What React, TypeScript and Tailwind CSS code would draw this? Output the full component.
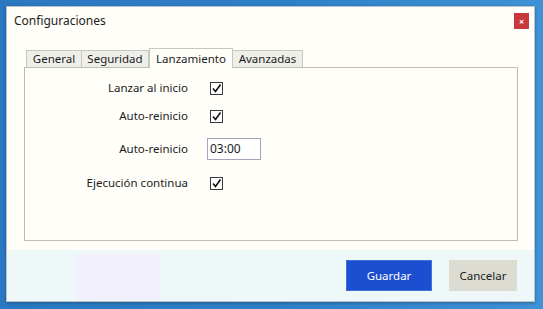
import React from "react";

function Check() {
  return (
    <div className="w-[13px] h-[13px] border border-[#3a3a3a] bg-white flex items-center justify-center">
      <svg width="11" height="11" viewBox="0 0 11 11">
        <polyline points="2,5.5 4.5,8.5 9.5,1.5" fill="none" stroke="#111" strokeWidth="1.6" />
      </svg>
    </div>
  );
}

export default function App() {
  const font = { fontFamily: '"Noto Sans", "Open Sans", sans-serif' };
  return (
    <div
      className="w-[543px] h-[309px] bg-gradient-to-r from-[#2a78c2] via-[#2f7fc6] to-[#3f92d6] pt-[6px] pl-[6px] overflow-hidden"
      style={font}
    >
      <div className="w-[529px] h-[296px] flex flex-col bg-[#fffef8] border border-[#b8c4cc] shadow-[0_1px_3px_rgba(0,0,0,0.3)] text-[11.5px] text-[#1c1c1c]">
        {/* title bar */}
        <div className="h-[30px] flex items-start justify-between pl-[7px] pr-[5px]">
          <span className="mt-[5px] text-[12px]">Configuraciones</span>
          <div className="mt-[6px] w-[15px] h-[16px] bg-[#c8393c] flex items-center justify-center text-white text-[9px] leading-none font-bold">
            ×
          </div>
        </div>
        {/* tabs + panel */}
        <div className="pl-[17px] pr-[16px] pt-[10px]">
          <div className="flex items-end h-[20px] pl-[2px]">
            <div className="w-[56px] h-[17px] flex items-center justify-center bg-[#efefea] border border-b-0 border-[#c8c8c2]">General</div>
            <div className="w-[67px] h-[17px] flex items-center justify-center bg-[#efefea] border border-b-0 border-l-0 border-[#c8c8c2]">Seguridad</div>
            <div className="w-[84px] h-[20px] flex items-center justify-center bg-[#fffef8] border border-b-0 border-[#c8c8c2] relative top-[1px] z-10">Lanzamiento</div>
            <div className="w-[70px] h-[17px] flex items-center justify-center bg-[#efefea] border border-b-0 border-l-0 border-[#c8c8c2]">Avanzadas</div>
          </div>
          <div className="h-[174px] border border-[#bdbdb6] bg-[#fffef8] pt-[6px]">
            <div className="grid grid-cols-[163px_auto] gap-x-[19px] items-center">
              <div className="h-[28px] flex items-center justify-end">Lanzar al inicio</div>
              <div className="pl-[3px]"><Check /></div>
              <div className="h-[28px] flex items-center justify-end">Auto-reinicio</div>
              <div className="pl-[3px]"><Check /></div>
              <div className="h-[22px] mt-[8px] flex items-center justify-end">Auto-reinicio</div>
              <div className="mt-[8px] w-[54px] h-[22px] border border-[#a8a2bd] bg-white flex items-center pl-[2px] text-[12px]">03:00</div>
              <div className="h-[28px] mt-[9px] flex items-center justify-end">Ejecución continua</div>
              <div className="mt-[9px] pl-[3px]"><Check /></div>
            </div>
          </div>
        </div>
        {/* footer */}
        <div className="mt-[9px] flex-1 bg-[#eef8f8] flex items-start justify-end pr-[17px] pt-[10px] gap-[17px] relative">
          <div className="absolute left-[68px] top-[4px] w-[86px] h-[46px] bg-[#f2f0fb]" />
          <div className="w-[86px] h-[31px] bg-[#1c4fd0] border border-[#4070d8] text-white flex items-center justify-center">Guardar</div>
          <div className="w-[68px] h-[31px] bg-[#dcdcd3] flex items-center justify-center">Cancelar</div>
        </div>
      </div>
    </div>
  );
}
